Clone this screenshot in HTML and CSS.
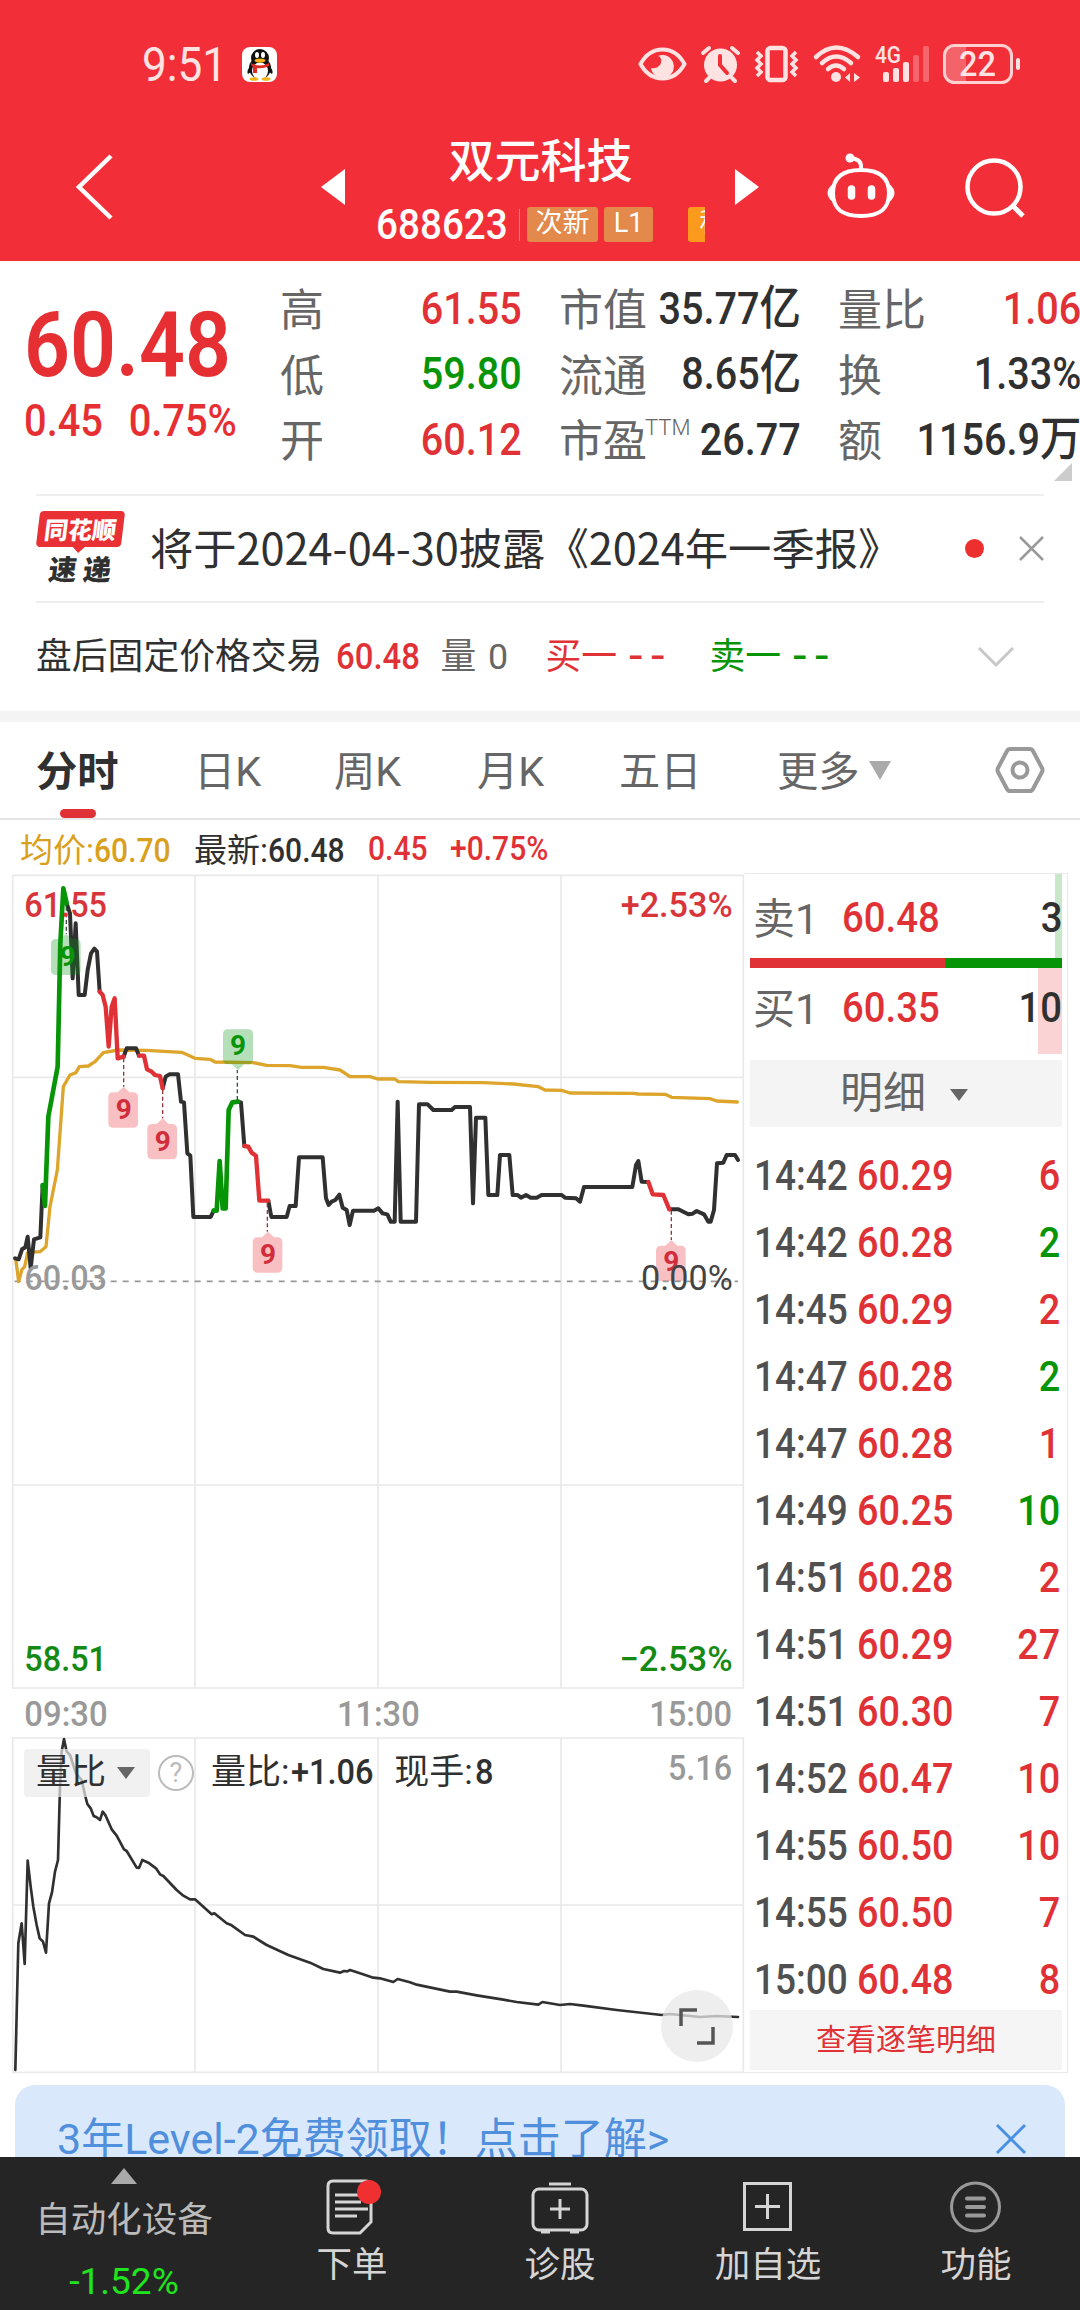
FILE: index.html
```html
<!DOCTYPE html>
<html lang="zh-CN">
<head>
    <meta charset="UTF-8">
    <meta name="viewport" content="width=device-width, initial-scale=1.0">
    <title>双元科技 688623</title>
    <link rel="stylesheet" href="styles.css">
</head>
<body>
    <header class="header">
        <div class="status-bar">
            <span class="clock num">9:51</span>
            <svg class="qq" width="35" height="35" viewBox="0 0 35 35">
                <rect width="35" height="35" rx="8" fill="#fff"/>
                <ellipse cx="18" cy="21" rx="11" ry="11" fill="#111"/>
                <path d="M6 27q-2-3 3-9l4 4z M30 27q2-3-3-9l-4 4z" fill="#111"/>
                <ellipse cx="18" cy="11" rx="9" ry="9" fill="#111"/>
                <ellipse cx="18" cy="24" rx="8" ry="8.500" fill="#fff"/>
                <ellipse cx="15" cy="8" rx="2" ry="3" fill="#fff"/>
                <ellipse cx="21" cy="8" rx="2" ry="3" fill="#fff"/>
                <ellipse cx="18" cy="13.500" rx="5.500" ry="2" fill="#f5b51b"/>
                <path d="M9 16q9 5 18 0v3q-6 3-12 2v5h-4v-6q-2-1-2-4z" fill="#e02a25"/>
                <ellipse cx="12" cy="32" rx="4.500" ry="1.800" fill="#f5b51b"/>
                <ellipse cx="24" cy="32" rx="4.500" ry="1.800" fill="#f5b51b"/>
            </svg>
            <div class="status-icons">
                <svg width="49" height="36" viewBox="0 0 49 36">
                    <path d="M2.500 18C8 8 16 3.500 24.500 3.500S41 8 46.500 18C41 28 33 32.500 24.500 32.500S8 28 2.500 18z" fill="none" stroke="#ffe3e3" stroke-width="4"/>
                    <path d="M25 9a11.500 11.500 0 1 1-12 13q5 1 8-2 3-3 2-7-1-3-3-3 2-1 5-1z" fill="#ffe3e3"/>
                </svg>
                <svg width="39" height="38" viewBox="0 0 39 38" fill="none" stroke="#ffe3e3" stroke-linecap="round">
                    <circle cx="19.500" cy="20" r="16.500" fill="#ffe3e3" stroke="none"/>
                    <path d="M2 8l6-5M37 8l-6-5M8 33l-3 3M31 33l3 3" stroke-width="4"/>
                    <path d="M19 11v9l7 8" stroke="#f22f38" stroke-width="4"/>
                </svg>
                <svg width="45" height="38" viewBox="0 0 45 38" fill="none" stroke="#ffe3e3">
                    <rect x="13.500" y="3" width="18" height="32" rx="3" stroke-width="4.500"/>
                    <path d="M3 7l4 4-4 4 4 4-4 4 4 4-4 4M42 7l-4 4 4 4-4 4 4 4-4 4 4 4" stroke-width="3.500"/>
                </svg>
                <svg width="48" height="38" viewBox="0 0 48 38" fill="none" stroke="#ffe3e3" stroke-width="4.500" stroke-linecap="round">
                    <path d="M3 12Q23-7 45 12M9 18Q23 5 38 18M15 24Q23 17 31 24"/>
                    <circle cx="23" cy="32" r="5" fill="#ffe3e3" stroke="none"/>
                    <path d="M37 28v9l-5-4.500zM41 28v9l6-4.500z" fill="#ffe3e3" stroke="none"/>
                </svg>
                <svg width="54" height="38" viewBox="0 0 54 38">
                    <text class="net" x="0" y="18" textLength="26" lengthAdjust="spacingAndGlyphs">4G</text>
                    <g fill="#ffe3e3">
                        <rect x="8" y="27" width="6" height="10" rx="2"/>
                        <rect x="18" y="23" width="6" height="14" rx="2"/>
                        <rect x="28" y="17" width="6" height="20" rx="2"/>
                        <rect x="38" y="10" width="6" height="27" rx="2" opacity=".3"/>
                        <rect x="48" y="1" width="6" height="36" rx="2" opacity=".3"/>
                    </g>
                </svg>
                <svg width="78" height="40" viewBox="0 0 78 40">
                    <path d="M11 3h12v34H11q-8 0-8-8V11q0-8 8-8z" fill="#fff" opacity=".25"/>
                    <rect x="1.500" y="1.500" width="67" height="37" rx="10" fill="none" stroke="#ffd0d0" stroke-width="3"/>
                    <rect x="73" y="14" width="4" height="12" rx="2" fill="#ffe3e3"/>
                    <text class="battery" x="16" y="32" textLength="37" lengthAdjust="spacingAndGlyphs">22</text>
                </svg>
            </div>
        </div>
        <div class="title-bar">
            <svg class="back" width="38" height="66" viewBox="0 0 38 66"><path d="M35 2L3 33l32 31" fill="none" stroke="#fff" stroke-width="4.500"/></svg>
            <svg class="prev" width="24" height="36" viewBox="0 0 24 36"><path d="M24 0v36L0 18z" fill="#fff"/></svg>
            <div class="stock">
                <h1>双元科技</h1>
                <div class="stock-sub">
                    <span class="code num">688623</span>
                    <i class="divider"></i>
                    <span class="tag">次新</span>
                    <span class="tag tag-l1">L1</span>
                    <span class="tag tag-cut">科</span>
                </div>
            </div>
            <svg class="next" width="24" height="36" viewBox="0 0 24 36"><path d="M0 0v36l24-18z" fill="#fff"/></svg>
            <svg class="robot" width="72" height="66" viewBox="0 0 72 66" fill="none" stroke="#fff" stroke-width="4">
                <path d="M36 17c15 0 28 5 28 23 0 17-10 23-28 23S8 57 8 40c0-18 13-23 28-23z"/>
                <path d="M36 17V13q0-7-11-8"/>
                <circle cx="25" cy="5" r="4.500" fill="#fff" stroke="none"/>
                <path d="M8 32q-9 8 0 16zM64 32q9 8 0 16z" fill="#fff" stroke-width="2"/>
                <path d="M26.500 36v7M46.500 36v7" stroke-width="7.500" stroke-linecap="round"/>
            </svg>
            <svg class="search" width="64" height="64" viewBox="0 0 64 64" fill="none" stroke="#fff" stroke-width="4.500">
                <circle cx="31" cy="31" r="26.500"/>
                <path d="M50 50l10 10" stroke-width="5"/>
            </svg>
        </div>
    </header>

    <section class="quote">
        <div class="price-box">
            <div class="price num">60.48</div>
            <div class="change num"><span>0.45</span><span>0.75%</span></div>
        </div>
        <dl class="stats">
            <div><dt>高</dt><dd class="num up">61.55</dd></div>
            <div><dt>市值</dt><dd class="num">35.77<b>亿</b></dd></div>
            <div><dt>量比</dt><dd class="num up">1.06</dd></div>
            <div><dt>低</dt><dd class="num down">59.80</dd></div>
            <div><dt>流通</dt><dd class="num">8.65<b>亿</b></dd></div>
            <div><dt>换</dt><dd class="num">1.33%</dd></div>
            <div><dt>开</dt><dd class="num up">60.12</dd></div>
            <div><dt>市盈<sup>TTM</sup></dt><dd class="num">26.77</dd></div>
            <div><dt>额</dt><dd class="num">1156.9<b>万</b></dd></div>
        </dl>
        <i class="corner"></i>
    </section>

    <section class="news">
        <div class="news-logo">
            <span class="logo-top">同花顺</span>
            <span class="logo-bottom">速 递</span>
        </div>
        <p>将于2024-04-30披露《2024年一季报》</p>
        <i class="dot"></i>
        <svg width="25" height="25" viewBox="0 0 25 25"><path d="M1 1l23 23M24 1L1 24" stroke="#999" stroke-width="2.500"/></svg>
    </section>

    <section class="after-hours">
        <span>盘后固定价格交易</span>
        <span class="num up fixed-price">60.48</span>
        <span class="vol">量 0</span>
        <span class="up bid">买一 <b>--</b></span>
        <span class="down ask">卖一 <b>--</b></span>
        <svg width="36" height="22" viewBox="0 0 36 22"><path d="M1 2l17 17L35 2" fill="none" stroke="#c8c8c8" stroke-width="3"/></svg>
    </section>

    <nav class="tabs">
        <span class="tab active">分时</span>
        <span class="tab">日K</span>
        <span class="tab">周K</span>
        <span class="tab">月K</span>
        <span class="tab">五日</span>
        <span class="tab">更多<i class="caret"></i></span>
        <svg class="setting" width="50" height="48" viewBox="0 0 50 48" fill="none" stroke="#999" stroke-width="4">
            <path d="M15 3h20q2 0 3 2l9 17q1 2 0 4l-9 17q-1 2-3 2H15q-2 0-3-2L3 26q-1-2 0-4l9-17q1-2 3-2z"/>
            <circle cx="25" cy="24" r="7.500"/>
        </svg>
    </nav>

    <div class="avg-row">
        <span class="avg">均价:<b class="num">60.70</b></span>
        <span class="last">最新:<b class="num">60.48</b></span>
        <span class="num up diff">0.45</span>
        <span class="num up">+0.75%</span>
    </div>

    <main class="board">
        <div class="charts">
            <!-- three units to a pixel -->
            <svg width="748" height="1199" viewBox="0 15 2244 3597">
                <g class="grid">
                    <path d="M38 16H2230V2454H38zM585 16V2454M1134 16V2454M1683 16V2454M38 622H2230M38 1845H2230"/>
                    <path d="M38 2604H2230V3607H38zM585 2604V3607M1134 2604V3607M1683 2604V3607M38 3105H2230"/>
                </g>
                <path class="zero" d="M44 1234H2214"/>
                <path class="avg-line" d="M47 1165L56 1235 66 1198 74 1190 83 1148 120 1145 138 1130 150 1010 172 900 190 650 210 615 228 608 238 590 265 588 285 575 310 548 355 540 440 541 545 547 585 565 630 568 645 576 760 578 800 586 870 587 905 592 970 592 1020 600 1050 620 1110 620 1133 627 1185 627 1195 635 1290 637 1450 638 1540 642 1615 650 1635 660 1685 661 1710 669 1900 670 1915 672 1995 673 2015 682 2130 686 2150 693 2212 696"/>
                <g class="price-line">
                    <path d="M45 1165L56 1168 66 1138 76 1132 83 1100 92 1195 102 1108 121 1102 128 945"/>
                    <path d="M200 100L210 130 218 325 227 160 236 375 254 375 263 300 273 250 283 236 291 245 299 365"/>
                    <path d="M371 560L380 535H408L417 557M488 655L497 620 508 613H534L543 695 552 697 562 850 571 857 580 1041H632L641 1022M714 695L723 697 733 828"/>
                    <path d="M805 992L814 1041H860L869 1008H887L897 862H968L978 985 986 1005 995 995 1006 990 1018 974 1028 1013 1040 1020 1049 1065 1059 1022H1122L1135 1015 1148 1030 1162 1033 1172 1055H1184L1193 695 1202 1055H1248L1257 703H1283L1300 720H1355L1365 711H1410L1419 1000 1428 743H1456L1465 975H1492L1500 855H1528L1538 975H1553L1563 983 1578 975 1592 983H1610L1625 975H1685L1695 983 1728 985 1740 995 1752 951H1897L1908 885 1915 873 1925 935 1945 936"/>
                    <path d="M2008 1018H2035L2065 1033 2078 1031 2090 1023 2112 1033 2125 1055H2132L2142 1020 2151 880 2170 878 2180 855H2205L2214 870"/>
                    <path class="fall" d="M299 365L308 375 317 410 326 530 335 410 344 385 353 565 371 560M417 557H432L441 598 455 605 465 615 480 618 488 655M733 828L745 830 755 848 768 857 778 992H805M1945 936L1958 973 1990 975 2008 1018"/>
                    <path class="rise" d="M128 945L135 1008 145 740 173 590 181 220 190 55 200 100M641 1022H650L659 873 668 1015H677L686 720 697 697 714 695"/>
                </g>
                <path class="leader" d="M371 565V650M488 660V745M802 1000V1085M2014 1022V1110"/>
                <path class="leader green" d="M199 110V192M712 690V600"/>
                <g class="flag-red">
                    <path d="M371 650l18 17h10q15 0 15 15v76q0 15-15 15h-59q-15 0-15-15v-76q0-15 15-15h13z"/>
                    <path d="M488 745l18 17h10q15 0 15 15v76q0 15-15 15h-59q-15 0-15-15v-76q0-15 15-15h13z"/>
                    <path d="M804 1085l18 17h10q15 0 15 15v76q0 15-15 15h-59q-15 0-15-15v-76q0-15 15-15h13z"/>
                    <path d="M2014 1110l18 17h10q15 0 15 15v76q0 15-15 15h-59q-15 0-15-15v-76q0-15 15-15h13z"/>
                    <text x="371" y="746">9</text>
                    <text x="488" y="842">9</text>
                    <text x="804" y="1181">9</text>
                    <text x="2014" y="1204">9</text>
                </g>
                <g class="flag-green">
                    <path d="M198 192l18 15h10q16 0 16 15v78q0 15-15 15h-59q-15 0-15-15v-78q0-15 15-15h13z"/>
                    <path d="M714 600l-18-17h-12q-15 0-15-15v-75q0-15 15-15h60q15 0 15 15v75q0 15-15 15h-12z"/>
                    <text x="203" y="287">9</text>
                    <text x="714" y="556">9</text>
                </g>
                <g class="axis">
                    <text class="t-up" x="73" y="140" textLength="248" lengthAdjust="spacingAndGlyphs">61.55</text>
                    <text class="t-up" x="1862" y="140" textLength="336" lengthAdjust="spacingAndGlyphs">+2.53%</text>
                    <text class="t-grey" x="73" y="1259" textLength="248" lengthAdjust="spacingAndGlyphs">60.03</text>
                    <text class="t-dark" x="1923" y="1259" textLength="275" lengthAdjust="spacingAndGlyphs">0.00%</text>
                    <text class="t-down" x="73" y="2403" textLength="248" lengthAdjust="spacingAndGlyphs">58.51</text>
                    <text class="t-down" x="1858" y="2403" textLength="340" lengthAdjust="spacingAndGlyphs">−2.53%</text>
                    <text class="t-grey" x="73" y="2568" textLength="250" lengthAdjust="spacingAndGlyphs">09:30</text>
                    <text class="t-grey" x="1011" y="2568" textLength="248" lengthAdjust="spacingAndGlyphs">11:30</text>
                    <text class="t-grey" x="1948" y="2568" textLength="248" lengthAdjust="spacingAndGlyphs">15:00</text>
                    <text class="t-grey" x="2004" y="2729" textLength="192" lengthAdjust="spacingAndGlyphs">5.16</text>
                </g>
                <path class="ratio-line" transform="translate(0 2310)" d="M46 1290L55 910 65 850 74 972 83 662 92 740 100 800 110 855 119 895 129 905 138 938 147 790 156 757 165 695 174 660 180 440 185 335 192 297 200 335 210 345 228 400 245 420 255 465 262 492 272 505 281 528 290 532 300 540 308 515 317 527 335 568 350 587 372 628 380 633 410 683 417 684 427 660 445 668 468 685 480 703 490 708 530 750 550 767 570 778 585 778 635 823 643 820 680 850 695 856 735 885 760 890 800 915 865 945 930 968 970 987 1020 998 1032 993 1042 994 1050 990 1080 1000 1120 1013 1140 1015 1180 1026 1193 1017 1230 1027 1250 1034 1350 1055 1370 1055 1430 1066 1510 1079 1550 1086 1615 1094 1627 1086 1680 1095 1710 1092 1750 1097 1850 1110 1985 1125 2010 1122 2100 1131 2150 1128 2214 1131"/>
            </svg>
            <div class="ratio-bar">
                <span class="picker">量比<i class="caret"></i></span>
                <span class="help">?</span>
                <span class="ratio-text">量比:<b class="num">+1.06</b></span>
                <span class="ratio-text">现手:<b class="num">8</b></span>
            </div>
            <div class="expand">
                <svg width="36" height="37" viewBox="0 0 36 37" fill="none" stroke="#555" stroke-width="3.500"><path d="M2 18V2h16M34 19v16H18"/></svg>
            </div>
        </div>

        <aside class="side">
            <div class="level sell"><span>卖1</span><b class="num up">60.48</b><em class="num">3</em></div>
            <div class="ratio"><i></i></div>
            <div class="level buy"><span>买1</span><b class="num up">60.35</b><em class="num">10</em></div>
            <div class="detail-head">明细<i class="caret"></i></div>
            <ul class="ticks">
                <li><span class="num">14:42</span><b class="num">60.29</b><em class="num">6</em></li>
                <li><span class="num">14:42</span><b class="num">60.28</b><em class="num down">2</em></li>
                <li><span class="num">14:45</span><b class="num">60.29</b><em class="num">2</em></li>
                <li><span class="num">14:47</span><b class="num">60.28</b><em class="num down">2</em></li>
                <li><span class="num">14:47</span><b class="num">60.28</b><em class="num">1</em></li>
                <li><span class="num">14:49</span><b class="num">60.25</b><em class="num down">10</em></li>
                <li><span class="num">14:51</span><b class="num">60.28</b><em class="num">2</em></li>
                <li><span class="num">14:51</span><b class="num">60.29</b><em class="num">27</em></li>
                <li><span class="num">14:51</span><b class="num">60.30</b><em class="num">7</em></li>
                <li><span class="num">14:52</span><b class="num">60.47</b><em class="num">10</em></li>
                <li><span class="num">14:55</span><b class="num">60.50</b><em class="num">10</em></li>
                <li><span class="num">14:55</span><b class="num">60.50</b><em class="num">7</em></li>
                <li><span class="num">15:00</span><b class="num">60.48</b><em class="num">8</em></li>
            </ul>
            <div class="more">查看逐笔明细</div>
        </aside>
    </main>

    <div class="banner">
        <span>3年Level-2免费领取！点击了解&gt;</span>
        <svg width="32" height="32" viewBox="0 0 32 32"><path d="M2 2l28 28M30 2L2 30" stroke="#4a90e2" stroke-width="3"/></svg>
    </div>

    <footer class="bottom-nav">
        <div class="sector">
            <i class="tri"></i>
            <span>自动化设备</span>
            <b>-1.52%</b>
        </div>
        <div class="nav-item">
            <svg width="56" height="58" viewBox="0 0 56 58" fill="none" stroke="#d5d5d5" stroke-width="3">
                <path d="M9 3h33q5 0 5 5v36L36 55H9q-5 0-5-5V8q0-5 5-5z"/>
                <path d="M11 17h24M11 24h26M11 31h33M11 38h22"/>
                <circle cx="45" cy="14" r="12" fill="#f03030" stroke="none"/>
            </svg>
            <span>下单</span>
        </div>
        <div class="nav-item">
            <svg width="58" height="58" viewBox="0 0 58 58" fill="none" stroke="#d5d5d5" stroke-width="3">
                <rect x="2" y="11" width="54" height="41" rx="6"/>
                <path d="M18 6h22M29 21v20M19 31h20M10 54h9M39 54h9"/>
            </svg>
            <span>诊股</span>
        </div>
        <div class="nav-item">
            <svg width="58" height="58" viewBox="0 0 58 58" fill="none" stroke="#d5d5d5" stroke-width="3">
                <rect x="5.500" y="5.500" width="46" height="46"/>
                <path d="M28.500 16v25M16 28.500h25"/>
            </svg>
            <span>加自选</span>
        </div>
        <div class="nav-item">
            <svg width="58" height="58" viewBox="0 0 58 58" fill="none" stroke="#999" stroke-width="3">
                <circle cx="28.500" cy="29" r="24"/>
                <path d="M20 20.500h17M20 29h17M20 37.500h17" stroke-width="4" stroke-linecap="round"/>
            </svg>
            <span>功能</span>
        </div>
    </footer>
</body>
</html>
```
FILE: styles.css
```css
* {
    box-sizing: border-box;
}
body {
    margin: 0;
    width: 1080px;
    height: 2310px;
    overflow: hidden;
    background: #fff;
    color: #303030;
    font-family: Roboto, "Noto Sans CJK SC", sans-serif;
    display: flex;
    flex-direction: column;
}
h1, p, dl, dd, ul {
    margin: 0;
    padding: 0;
}
b, em, i {
    font-style: normal;
    font-weight: inherit;
}
svg {
    display: block;
    flex: none;
    overflow: visible;
}
/* narrow figures */
.num {
    display: inline-block;
    font-weight: 500;
    transform: scaleX(.89);
    transform-origin: left center;
}
.up { color: #e03236; }
.down { color: #079507; }
.caret {
    display: inline-block;
    border: 11px solid transparent;
    border-top: 19px solid #aaa;
    border-bottom: 0;
}

/* header */
.header {
    height: 261px;
    flex: none;
    background: #f22f38;
    color: #fff;
}
.status-bar {
    display: flex;
    align-items: center;
    height: 128px;
    padding: 0 59px 0 142px;
}
.clock {
    width: 100px;
    font-size: 48px;
    font-weight: 400;
    color: #ffe3e3;
    transform: scaleX(.92);
}
.status-icons {
    display: flex;
    align-items: center;
    gap: 14px;
    margin-left: auto;
}
.net {
    fill: #ffe3e3;
    font-size: 24px;
    font-weight: 500;
}
.battery {
    fill: #ffe3e3;
    font-size: 35px;
    font-weight: 500;
}
.title-bar {
    display: flex;
    align-items: center;
    height: 120px;
    padding-left: 76px;
}
.prev { margin-left: 207px; }
.back, .prev, .next { margin-top: -2px; }
.stock {
    width: 329px;
    margin: 11px 30px 0 31px;
}
.stock h1 {
    font-size: 46px;
    font-weight: 500;
    line-height: 62px;
    text-align: center;
}
.stock-sub {
    display: flex;
    align-items: center;
    height: 65px;
    overflow: hidden;
}
.code {
    flex: none;
    width: 143px;
    font-size: 42px;
    transform: scaleX(.92);
}
.divider {
    flex: none;
    width: 1px;
    height: 32px;
    margin-right: 7px;
    background: #e58a50;
}
.tag {
    flex: none;
    width: 71px;
    height: 35px;
    margin-right: 6px;
    border-radius: 3px;
    background: #e2894b;
    font-size: 27px;
    line-height: 33px;
    text-align: center;
}
.tag-l1 { width: 49px; }
.tag-cut {
    width: 50px;
    margin-left: 29px;
    background: #fb9a1c;
}
.robot { margin: -5px 66px 0; }

/* quote */
.quote {
    position: relative;
    display: flex;
    height: 233px;
    flex: none;
}
.price-box {
    width: 280px;
    padding: 35px 0 0 24px;
    color: #e62f32;
}
.price {
    font-size: 91px;
    font-weight: 600;
    line-height: 98px;
    transform: scaleX(.885);
}
.change {
    display: flex;
    gap: 29px;
    font-size: 45px;
    line-height: 54px;
    transform: scaleX(.885);
}
.stats {
    display: grid;
    grid-template-columns: 241px 241px 242px;
    grid-auto-rows: 65.5px;
    column-gap: 38px;
    padding-top: 15px;
}
.stats div {
    display: flex;
    justify-content: space-between;
    align-items: center;
    white-space: nowrap;
}
.stats dt {
    position: relative;
    padding-bottom: 3px;
    font-size: 44px;
    color: #666;
}
.stats sup {
    position: absolute;
    left: 86px;
    top: 11px;
    font-size: 22px;
    font-weight: 300;
    line-height: 1;
}
.stats dd {
    margin: 0 -1px 0 -30px;
    font-size: 45px;
    line-height: 60px;
    transform: scaleX(.88);
    transform-origin: right center;
}
.stats dd b {
    font-size: 47px;
    line-height: 1;
}
.corner {
    position: absolute;
    right: 8px;
    bottom: 13px;
    border-left: 18px solid transparent;
    border-bottom: 18px solid #ccc;
}

/* news */
.news {
    display: flex;
    align-items: center;
    height: 109px;
    flex: none;
    margin: 0 36px;
    border-top: 2px solid #eee;
    border-bottom: 2px solid #eee;
}
.news-logo {
    display: flex;
    flex-direction: column;
    align-items: center;
    width: 89px;
    height: 75px;
    font-weight: 900;
    font-family: "Noto Sans CJK SC", sans-serif;
}
.logo-top {
    position: relative;
    width: 85px;
    height: 37px;
    border-radius: 4px;
    background: #e93034;
    color: #fff;
    font-size: 24px;
    line-height: 36px;
    text-align: center;
    transform: skewX(-7deg);
}
.logo-top::after {
    content: "";
    position: absolute;
    left: 37px;
    top: 36px;
    border: 6px solid transparent;
    border-top-color: #e93034;
    border-bottom: 0;
}
.logo-bottom {
    margin-top: 3px;
    font-size: 28px;
    line-height: 37px;
    transform: skewX(-7deg);
    white-space: nowrap;
}
.news p {
    width: 815px;
    padding: 0 0 5px 25px;
    font-family: "Noto Sans CJK SC", sans-serif;
    font-size: 43.3px;
    line-height: 60px;
    white-space: nowrap;
}
.dot {
    width: 19px;
    height: 19px;
    margin: 0 35px 0 26px;
    border-radius: 50%;
    background: #ee2f2f;
}

/* after hours */
.after-hours {
    display: flex;
    align-items: center;
    height: 108px;
    flex: none;
    padding: 0 66px 0 36px;
    font-size: 35.8px;
    line-height: 50px;
    white-space: nowrap;
}
.after-hours .fixed-price {
    width: 104px;
    margin: 0 0 0 14px;
    font-size: 37px;
}
.vol {
    width: 105px;
    color: #666;
    word-spacing: 3px;
}
.bid, .ask { width: 164px; }
.after-hours span > b {
    margin-left: 2px;
    letter-spacing: 6px;
    font-size: 44px;
    line-height: 1;
    font-family: "DejaVu Sans", sans-serif;
}
.after-hours svg { margin-left: auto; }

/* tabs */
.tabs {
    display: grid;
    grid-template-columns: 158px 140px 143px 142px 158px 218px 50px;
    align-items: center;
    height: 109px;
    flex: none;
    padding-left: 36px;
    border-top: 11px solid #f4f4f4;
    border-bottom: 2px solid #e6e6e6;
    font-size: 41.3px;
    color: #666;
}
.tab {
    position: relative;
    height: 96px;
    line-height: 96px;
    padding-top: 2px;
}
.tab .caret {
    margin-left: 9px;
    vertical-align: 6px;
}
.active {
    color: #303030;
    font-weight: 700;
}
.active::after {
    content: "";
    position: absolute;
    left: 24px;
    bottom: 0;
    width: 36px;
    height: 9px;
    border-radius: 5px;
    background: #e03236;
}
.avg-row {
    display: flex;
    align-items: center;
    height: 53px;
    flex: none;
    padding: 3px 0 0 20px;
    font-size: 33px;
    white-space: nowrap;
}
.avg-row span:not(.num) { width: 174px; }
.avg-row .num { transform: scaleX(.91); }
.avg-row .diff { width: 82px; }
.avg { color: #d9a01d; }

/* charts */
.board {
    display: flex;
    height: 1200px;
    flex: none;
}
.charts {
    position: relative;
    width: 744px;
    padding-top: 2px;
}
.grid {
    fill: none;
    stroke: #e9e9e9;
    stroke-width: 5;
}
.zero {
    stroke: #999;
    stroke-width: 5;
    stroke-dasharray: 18 18;
}
.avg-line, .price-line, .ratio-line {
    fill: none;
    stroke-linejoin: round;
    stroke-linecap: round;
}
.avg-line {
    stroke: #dda52c;
    stroke-width: 10;
}
.price-line {
    stroke: #303030;
    stroke-width: 12;
}
.fall {
    stroke: #e03236;
    stroke-width: 13;
}
.rise {
    stroke: #079507;
    stroke-width: 14;
}
.ratio-line {
    stroke: #303030;
    stroke-width: 8;
}
.leader {
    stroke: #93363c;
    stroke-width: 4;
    stroke-dasharray: 12 8;
}
.leader.green { stroke: #34553a; }
.flag-red path { fill: rgba(235, 60, 70, .32); }
.flag-green path { fill: rgba(10, 150, 20, .3); }
.flag-red text, .flag-green text {
    font-size: 84px;
    font-weight: 700;
    text-anchor: middle;
}
.flag-red text { fill: #d02c3a; }
.flag-green text { fill: #079507; }
.axis {
    font-size: 106px;
    font-weight: 500;
}
.t-up { fill: #d8353b; }
.t-down { fill: #148a14; }
.t-grey { fill: #999; }
.t-dark {
    fill: #444;
    font-weight: 400;
}
.ratio-bar {
    position: absolute;
    left: 24px;
    top: 876px;
    display: flex;
    align-items: center;
    height: 48px;
    font-size: 35px;
    line-height: 44px;
}
.picker {
    display: flex;
    align-items: center;
    width: 126px;
    height: 48px;
    padding: 0 0 0 12px;
    border-radius: 4px;
    background: rgba(235, 235, 235, .7);
}
.picker .caret {
    margin: 0 0 0 11px;
    border-width: 12px 9px 0;
    border-top-color: #666;
}
.help {
    width: 36px;
    height: 36px;
    margin: 0 17px 0 8px;
    border: 2px solid #bbb;
    border-radius: 50%;
    color: #bbb;
    font-size: 27px;
    line-height: 32px;
    text-align: center;
}
.ratio-text {
    margin-right: 14px;
    white-space: nowrap;
}
.ratio-text .num {
    margin-left: 2px;
    transform: scaleX(.93);
}
.expand {
    position: absolute;
    left: 661px;
    top: 1117px;
    display: flex;
    align-items: center;
    justify-content: center;
    width: 72px;
    height: 72px;
    border-radius: 50%;
    background: rgba(232, 232, 232, .75);
}

/* order book */
.side {
    width: 324px;
    height: 1200px;
    padding: 0 5px 0 6px;
    border: 1px solid #e9e9e9;
    border-left: 0;
}
.side em { transform-origin: right center; }
.level {
    display: grid;
    grid-template-columns: 89px 1fr auto;
    align-items: center;
    height: 84px;
    padding: 2px 0 0 3px;
    font-size: 42px;
    color: #303030;
}
.level span {
    margin-top: -3px;
    color: #666;
}
.level b, .level em { font-size: 43px; }
.sell { background: linear-gradient(#c9e8ca, #c9e8ca) right / 7px 100% no-repeat; }
.buy {
    height: 86px;
    padding: 0 0 8px 3px;
    background: linear-gradient(#fad4d5, #fad4d5) right / 24px 100% no-repeat;
}
.ratio {
    height: 10px;
    background: #079507;
}
.ratio i {
    display: block;
    width: 62.5%;
    height: 10px;
    background: #e03236;
}
.detail-head {
    height: 67px;
    margin-top: 6px;
    padding-left: 90px;
    background: #f4f4f4;
    color: #666;
    font-size: 43px;
    line-height: 67px;
}
.detail-head .caret {
    margin-left: 24px;
    vertical-align: 7px;
    border-width: 12px 9px 0;
    border-top-color: #666;
}
.ticks {
    height: 883px;
    padding-top: 15px;
    list-style: none;
    font-size: 42.5px;
}
.ticks li {
    display: grid;
    grid-template-columns: 103px 1fr auto;
    align-items: center;
    height: 67px;
    padding: 0 2px 0 4px;
    color: #e03236;
}
.ticks span {
    color: #505050;
    transform: scaleX(.87);
}
.ticks .down { color: #079507; }
.more {
    height: 60px;
    background: #f5f5f5;
    color: #e03236;
    font-size: 30px;
    line-height: 60px;
    text-align: center;
}

/* banner */
.banner {
    display: flex;
    align-items: center;
    justify-content: space-between;
    height: 100px;
    margin: 12px 15px -28px;
    flex: none;
    padding: 8px 38px 0 42px;
    border-radius: 20px 20px 0 0;
    background: #dae8fc;
    color: #4f8fdc;
    font-size: 43px;
}
.banner span { padding-bottom: 8px; }

/* bottom nav */
.bottom-nav {
    position: relative;
    display: flex;
    height: 153px;
    flex: none;
    background: #252525;
    color: #d5d5d5;
    font-size: 35.5px;
}
.sector {
    display: flex;
    flex-direction: column;
    align-items: center;
    width: 248px;
    padding-top: 11px;
}
.sector span {
    margin-top: 11px;
    line-height: 50px;
    color: #bbb;
}
.sector b {
    margin-top: 12px;
    font-size: 37px;
    line-height: 50px;
    color: #1fe51f;
}
.tri {
    border: 13px solid transparent;
    border-top: 0;
    border-bottom: 16px solid #aaa;
}
.nav-item {
    display: flex;
    flex-direction: column;
    align-items: center;
    width: 208px;
    padding-top: 21px;
    line-height: 58px;
}
```
